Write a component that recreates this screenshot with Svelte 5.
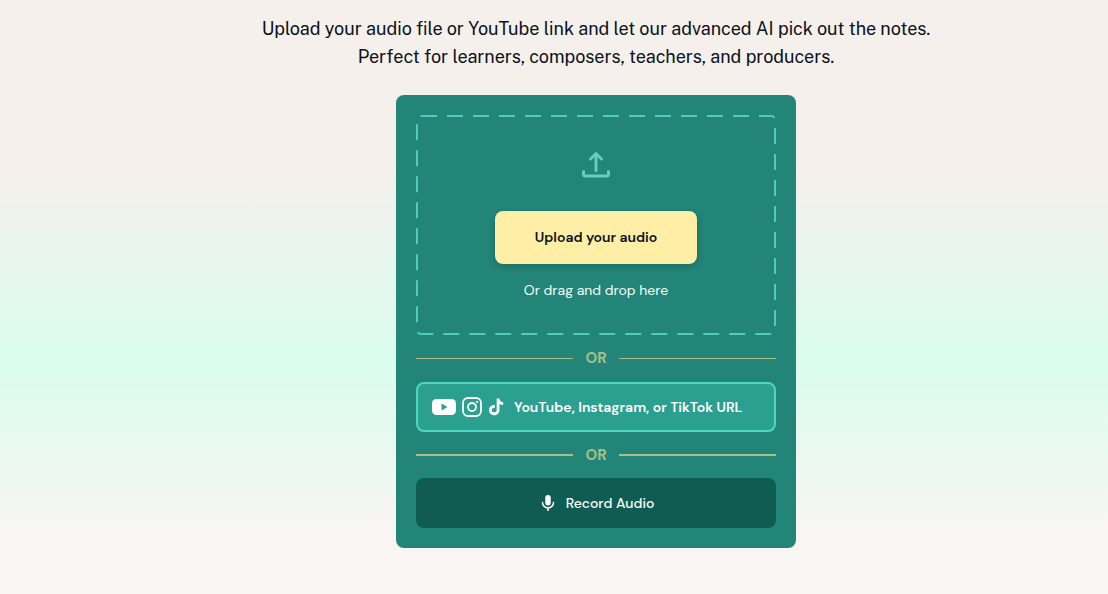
<script>
  const copy = [
    'Upload your audio file or YouTube link and let our advanced AI pick out the notes.',
    'Perfect for learners, composers, teachers, and producers.'
  ];
  const stamps = [
    { x: 120, y: 545, t: '2026/02/10' },
    { x: 315, y: 550, t: 'yv-dz637' },
    { x: 95, y: 450, t: '2026/02/10' },
    { x: 250, y: 490, t: 'yv-dz637' },
    { x: 170, y: 415, t: 'yv-dz637' },
    { x: 1020, y: 180, t: 'yv-dz637' },
    { x: 30, y: 495, t: 'yv-dz637' }
  ];
</script>

<main class="page">
  <p class="lead">{copy[0]}<br />{copy[1]}</p>

  <section class="card">
    <div class="drop">
      <svg class="dashes" width="360" height="220" viewBox="0 0 360 220" aria-hidden="true">
        <rect x="1" y="1" width="358" height="218" rx="4" fill="none" stroke="#4ecdb9" stroke-width="2" stroke-dasharray="16 10" />
      </svg>
      <svg class="upload" width="30" height="30" viewBox="0 0 30 30" aria-hidden="true">
        <path d="M15 21.500V4.500M9.500 10 15 4.500l5.500 5.500M2.500 22.500v2.500a2 2 0 0 0 2 2h21a2 2 0 0 0 2-2v-2.500" fill="none" stroke="#68ccb9" stroke-width="3" stroke-linecap="round" stroke-linejoin="round" />
      </svg>
      <button class="upload-btn">Upload your audio</button>
      <span class="hint">Or drag and drop here</span>
    </div>

    <div class="or"><i></i><b>OR</b><i></i></div>

    <div class="url">
      <svg width="24" height="16" viewBox="0 0 24 16" aria-hidden="true">
        <rect width="24" height="16" rx="4.500" fill="#fff" />
        <path d="M9.500 4.500v7l6-3.500z" fill="#2ba090" />
      </svg>
      <svg width="20" height="20" viewBox="0 0 20 20" aria-hidden="true">
        <rect x="1" y="1" width="18" height="18" rx="5" fill="none" stroke="#fff" stroke-width="1.800" />
        <circle cx="10" cy="10" r="4" fill="none" stroke="#fff" stroke-width="1.800" />
        <circle cx="15" cy="5" r="1.100" fill="#fff" />
      </svg>
      <svg class="tiktok" width="15" height="18" viewBox="0 0 16 18" aria-hidden="true">
        <path d="M8.200 0h2.900c.2 2.300 1.700 3.800 4 4v2.900c-1.500 0-2.800-.5-4-1.300v6.200c0 3.500-2.500 6-5.600 6S0 15.300 0 12.200c0-3.300 2.800-5.800 6.200-5.400v3c-1.700-.4-3.300.8-3.300 2.400 0 1.400 1.200 2.500 2.600 2.500 1.500 0 2.700-1.100 2.700-2.900z" fill="#fff" />
      </svg>
      <span>YouTube, Instagram, or TikTok URL</span>
    </div>

    <div class="or thick"><i></i><b>OR</b><i></i></div>

    <button class="record">
      <svg width="14" height="16" viewBox="0 0 14 16" aria-hidden="true">
        <rect x="4.250" y="0" width="5.500" height="10.500" rx="2.750" fill="#fff" />
        <path d="M1.500 7.500a5.500 5.500 0 0 0 11 0M7 13v2.500" fill="none" stroke="#fff" stroke-width="1.500" stroke-linecap="round" />
      </svg>
      Record Audio
    </button>
  </section>

  <div class="marks" aria-hidden="true">
    {#each stamps as s}
      <span style="left:{s.x}px;top:{s.y}px">{s.t}</span>
    {/each}
  </div>
</main>

<style>
  :global(body) {
    margin: 0;
  }
  .page {
    position: relative;
    height: 594px;
    box-sizing: border-box;
    padding: 15px 0 0 84px;
    overflow: hidden;
    display: flex;
    flex-direction: column;
    align-items: center;
    background: linear-gradient(180deg, #f5f0ec 0, #f5f0ec 170px, #d9fdec 360px, #f9f5f2 535px, #f9f5f2 100%);
    font-family: "DM Sans", Lato, "Open Sans", sans-serif;
  }
  .lead {
    margin: 0 0 24px;
    font: 400 18px/28px "Public Sans", Inter, "Liberation Sans", sans-serif;
    letter-spacing: -0.04px;
    color: #0b1220;
    text-align: center;
  }
  .card {
    width: 400px;
    height: 453px;
    box-sizing: border-box;
    padding: 20px;
    background: #228577;
    border-radius: 8px;
    display: flex;
    flex-direction: column;
  }
  .drop {
    position: relative;
    height: 220px;
    flex: none;
    display: flex;
    flex-direction: column;
    align-items: center;
    padding-top: 34px;
    box-sizing: border-box;
  }
  .dashes {
    position: absolute;
    inset: 0;
  }
  .upload {
    margin-bottom: 32px;
  }
  .upload-btn {
    width: 202px;
    height: 53px;
    border: 0;
    padding: 0 0 2px;
    border-radius: 8px;
    background: #ffeea6;
    color: #0b1220;
    font: 600 14px "DM Sans", Lato, sans-serif;
    box-shadow: 0 2px 6px rgba(0, 0, 0, 0.2);
  }
  .hint {
    margin-top: 16px;
    font-size: 14px;
    line-height: 20px;
    color: #f4fffc;
  }
  .or {
    height: 47px;
    flex: none;
    display: flex;
    align-items: center;
    gap: 12px;
  }
  .or i {
    flex: 1;
    height: 1px;
    background: #a9c088;
  }
  .or b {
    width: 22px;
    margin-bottom: 2px;
    text-align: center;
    font-size: 15px;
    font-weight: 700;
    color: #a2c08a;
  }
  .or.thick {
    height: 46px;
  }
  .or.thick i {
    height: 2px;
  }
  .or.thick b {
    margin-bottom: 0;
  }
  .url {
    height: 50px;
    flex: none;
    box-sizing: border-box;
    display: flex;
    align-items: center;
    gap: 6px;
    padding-left: 14px;
    background: #2ba090;
    border: 2px solid #4ed6c1;
    border-radius: 8px;
    color: #fff;
    font-size: 14px;
    font-weight: 600;
  }
  .tiktok {
    margin-left: 1px;
  }
  .url span {
    margin-left: 4px;
  }
  .record {
    height: 50px;
    flex: none;
    border: 0;
    padding: 0 0 0 3px;
    border-radius: 8px;
    background: #0f5c52;
    color: #fff;
    display: flex;
    align-items: center;
    justify-content: center;
    gap: 11px;
    font: 500 14px "DM Sans", Lato, sans-serif;
  }
  .marks {
    position: absolute;
    inset: 0;
    pointer-events: none;
  }
  .marks span {
    position: absolute;
    transform: rotate(-33deg);
    transform-origin: left bottom;
    white-space: nowrap;
    font: 400 20px "Liberation Sans", sans-serif;
    color: rgba(0, 0, 0, 0.012);
  }
</style>
